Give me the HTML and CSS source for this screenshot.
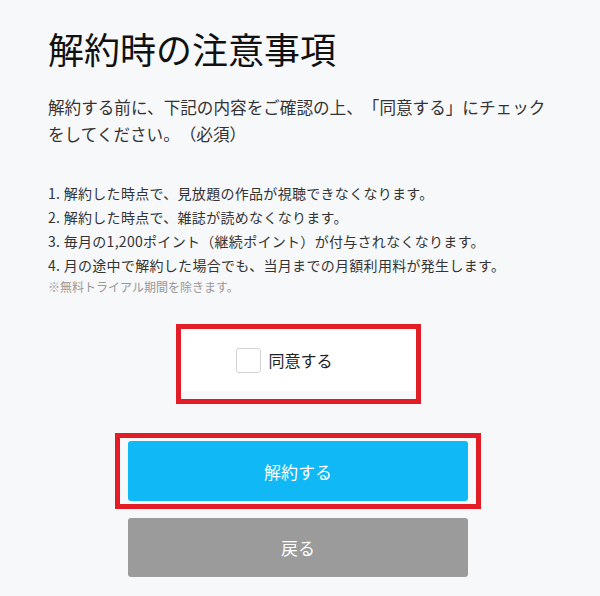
FILE: index.html
```html
<!DOCTYPE html>
<html lang="ja">
<head>
  <meta charset="UTF-8" />
  <meta name="viewport" content="width=device-width, initial-scale=1.0"/>
  <title>解約時の注意事項</title>
  <link rel="stylesheet" href="styles.css">
</head>
<body>
  <div class="page">
    <h1 class="title">解約時の注意事項</h1>
    <p class="lead">解約する前に、下記の内容をご確認の上、「同意する」にチェックをしてください。（必須）</p>

    <!-- 注意事項リスト -->
    <ol class="notes">
      <li>1. 解約した時点で、見放題の作品が視聴できなくなります。</li>
      <li>2. 解約した時点で、雑誌が読めなくなります。</li>
      <li>3. 毎月の1,200ポイント（継続ポイント）が付与されなくなります。</li>
      <li>4. 月の途中で解約した場合でも、当月までの月額利用料が発生します。</li>
    </ol>
    <p class="small">※無料トライアル期間を除きます。</p>

    <!-- 同意チェック -->
    <div class="mark agree-mark">
      <label class="agree">
        <input type="checkbox" id="agree" />
        <span class="box"></span>
        <span>同意する</span>
      </label>
    </div>

    <div class="actions">
      <div class="mark btn-mark">
        <button class="btn btn-primary">解約する</button>
      </div>
      <button class="btn btn-back">戻る</button>
    </div>
  </div>
</body>
</html>
```

FILE: styles.css
```css
body {
  margin: 0;
  background: #f7f8fa;
  color: #333;
  font-family: "Noto Sans CJK JP", "Noto Sans", sans-serif;
  text-spacing-trim: space-all;
}

.page {
  width: 500px;
  padding: 20px 0 0 48px;
}

.title {
  margin: 0;
  font-size: 36px;
  font-weight: 400;
  line-height: 56px;
  color: #111;
}

.lead {
  margin: 18px 0 0;
  font-size: 16.6px;
  line-height: 27px;
}

.notes {
  list-style: none;
  margin: 33px 0 0;
  padding: 0;
  font-size: 14px;
  line-height: 24px;
  letter-spacing: 0.3px;
}

.small {
  margin: 0;
  font-size: 12px;
  line-height: 20px;
  color: #999;
}

.mark {
  border: 5px solid #e31d25;
  box-sizing: border-box;
  margin: 0 auto;
}

.agree-mark {
  width: 245px;
  margin-top: 27px;
  padding-bottom: 8px;
}

.agree {
  display: flex;
  align-items: center;
  gap: 8px;
  height: 62px;
  padding-left: 55px;
  background: #fff;
  border-radius: 0 4px 4px 0;
  font-size: 16px;
  color: #222;
  cursor: pointer;
}

.agree input {
  display: none;
}

.box {
  width: 23px;
  height: 23px;
  border: 1px solid #d4d4d4;
  border-radius: 3px;
  background: #fff;
}

.actions {
  display: flex;
  flex-direction: column;
  align-items: center;
  gap: 9px;
  margin-top: 29px;
}

.btn-mark {
  padding: 3px 8px;
}

.btn {
  display: block;
  width: 340px;
  height: 60px;
  border: none;
  border-radius: 3px;
  font-family: inherit;
  font-size: 17px;
  color: #fff;
  cursor: pointer;
}

.btn-primary {
  background: #10b9f5;
}

.btn-back {
  height: 59px;
  background: #9b9b9b;
}
```
